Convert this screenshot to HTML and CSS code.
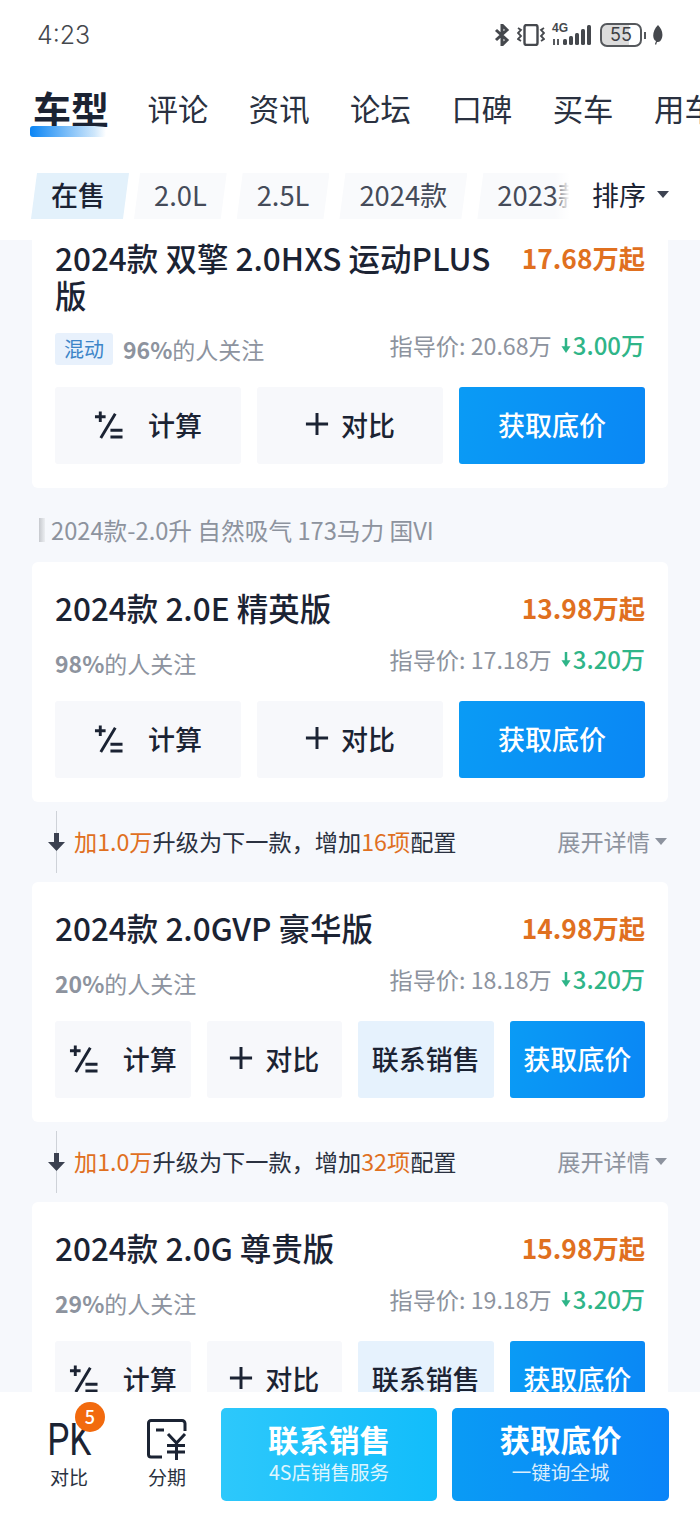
FILE: index.html
```html
<!DOCTYPE html>
<html lang="zh-CN">

<head>
    <meta charset="UTF-8">
    <meta name="viewport" content="width=device-width, initial-scale=1.0">
    <title>车型</title>
    <link rel="stylesheet" href="styles.css">
</head>

<body>
    <svg class="defs" width="0" height="0">
        <symbol id="calc" viewBox="0 0 30 30">
            <path d="M1 7h11M6.500 1.500v11M22 4L7 29M17 21h12.500M17 28h12.500" fill="none" stroke="#1b2333" stroke-width="3" />
        </symbol>
        <symbol id="plus" viewBox="0 0 26 26">
            <path d="M1 13h24M13 1v24" fill="none" stroke="#1b2333" stroke-width="3.200" />
        </symbol>
        <symbol id="down" viewBox="0 0 12 20">
            <path d="M6 1v12" stroke="currentColor" stroke-width="3" fill="none" />
            <path d="M0.500 11h11L6 19z" fill="currentColor" />
        </symbol>
        <symbol id="down-wide" viewBox="0 0 17 18">
            <path d="M6 0h5v9h6L8.500 18 0 9h6z" fill="currentColor" />
        </symbol>
    </svg>

    <div class="page">
        <header class="top">
            <div class="status">
                <span class="time">4:23</span>
                <div class="status-icons">
                    <svg width="16" height="22" viewBox="0 0 16 22">
                        <path d="M2 6l11 10-5 5V1l5 5L2 16" fill="none" stroke="#45484d" stroke-width="3" />
                    </svg>
                    <svg class="ic-vib" width="28" height="22" viewBox="0 0 28 22">
                        <rect x="7.500" y="1" width="13" height="20" rx="2" fill="none" stroke="#45484d" stroke-width="2.400" />
                        <path d="M1 4l3 2-3 3 3 3-3 3 3 2M27 4l-3 2 3 3-3 3 3 3-3 2" fill="none" stroke="#45484d" stroke-width="1.800" />
                    </svg>
                    <div class="net">
                        <span class="net-label">4G</span>
                        <svg width="40" height="22" viewBox="0 0 40 22">
                            <path d="M2 15v6M6 15v6" stroke="#45484d" stroke-width="1.800" />
                            <rect x="11" y="15" width="4" height="6" rx="1.500" fill="#45484d" />
                            <rect x="17" y="12" width="4" height="9" rx="1.500" fill="#45484d" />
                            <rect x="23" y="9" width="4" height="12" rx="1.500" fill="#45484d" />
                            <rect x="29" y="5" width="4" height="16" rx="1.500" fill="#45484d" />
                            <rect x="35" y="1" width="4" height="20" rx="1.500" fill="#45484d" />
                        </svg>
                    </div>
                    <div class="battery"><span class="battery-num">55</span></div>
                    <span class="battery-nub"></span>
                    <svg class="ic-leaf" width="11" height="20" viewBox="0 0 11 20">
                        <path d="M6 0C10 4 12 10 9 15c-1 2-3 2-4 2l-1 3-1-1 1-3C0 14 0 6 6 0z" fill="#45484d" />
                    </svg>
                </div>
            </div>

            <nav class="tabs">
                <a class="tab tab-active">车型</a>
                <a class="tab">评论</a>
                <a class="tab">资讯</a>
                <a class="tab">论坛</a>
                <a class="tab">口碑</a>
                <a class="tab">买车</a>
                <a class="tab">用车</a>
            </nav>

            <div class="filters">
                <div class="chips">
                    <span class="chip chip-active">在售</span>
                    <span class="chip">2.0L</span>
                    <span class="chip">2.5L</span>
                    <span class="chip">2024款</span>
                    <span class="chip">2023款</span>
                </div>
                <div class="sort">排序<i class="caret"></i></div>
            </div>
        </header>

        <main class="list">
            <section class="card card-scrolled">
                <div class="card-head">
                    <h2 class="name">2024款 双擎 2.0HXS 运动PLUS版</h2>
                    <span class="price">17.68万起</span>
                </div>
                <div class="card-sub">
                    <div class="attention"><span class="tag">混动</span><b>96%</b>的人关注</div>
                    <div class="guide">指导价: 20.68万<span class="drop"><svg class="drop-ic" width="10" height="17"><use href="#down" /></svg>3.00万</span></div>
                </div>
                <div class="actions">
                    <a class="btn"><svg class="ic-calc" width="29" height="29"><use href="#calc" /></svg>计算</a>
                    <a class="btn"><svg class="ic-plus" width="24" height="24"><use href="#plus" /></svg>对比</a>
                    <a class="btn btn-primary">获取底价</a>
                </div>
            </section>

            <div class="group-title">2024款-2.0升 自然吸气 173马力 国VI</div>

            <section class="card">
                <div class="card-head">
                    <h2 class="name">2024款 2.0E 精英版</h2>
                    <span class="price">13.98万起</span>
                </div>
                <div class="card-sub">
                    <div class="attention"><b>98%</b>的人关注</div>
                    <div class="guide">指导价: 17.18万<span class="drop"><svg class="drop-ic" width="10" height="17"><use href="#down" /></svg>3.20万</span></div>
                </div>
                <div class="actions">
                    <a class="btn"><svg class="ic-calc" width="29" height="29"><use href="#calc" /></svg>计算</a>
                    <a class="btn"><svg class="ic-plus" width="24" height="24"><use href="#plus" /></svg>对比</a>
                    <a class="btn btn-primary">获取底价</a>
                </div>
            </section>

            <div class="upgrade">
                <svg class="upgrade-ic" width="17" height="18"><use href="#down-wide" /></svg>
                <div class="upgrade-text"><em>加1.0万</em>升级为下一款，增加<em>16项</em>配置</div>
                <div class="expand">展开详情<i class="caret caret-grey"></i></div>
            </div>

            <section class="card">
                <div class="card-head">
                    <h2 class="name">2024款 2.0GVP 豪华版</h2>
                    <span class="price">14.98万起</span>
                </div>
                <div class="card-sub">
                    <div class="attention"><b>20%</b>的人关注</div>
                    <div class="guide">指导价: 18.18万<span class="drop"><svg class="drop-ic" width="10" height="17"><use href="#down" /></svg>3.20万</span></div>
                </div>
                <div class="actions">
                    <a class="btn"><svg class="ic-calc" width="29" height="29"><use href="#calc" /></svg>计算</a>
                    <a class="btn"><svg class="ic-plus" width="24" height="24"><use href="#plus" /></svg>对比</a>
                    <a class="btn btn-light">联系销售</a>
                    <a class="btn btn-primary">获取底价</a>
                </div>
            </section>

            <div class="upgrade">
                <svg class="upgrade-ic" width="17" height="18"><use href="#down-wide" /></svg>
                <div class="upgrade-text"><em>加1.0万</em>升级为下一款，增加<em>32项</em>配置</div>
                <div class="expand">展开详情<i class="caret caret-grey"></i></div>
            </div>

            <section class="card">
                <div class="card-head">
                    <h2 class="name">2024款 2.0G 尊贵版</h2>
                    <span class="price">15.98万起</span>
                </div>
                <div class="card-sub">
                    <div class="attention"><b>29%</b>的人关注</div>
                    <div class="guide">指导价: 19.18万<span class="drop"><svg class="drop-ic" width="10" height="17"><use href="#down" /></svg>3.20万</span></div>
                </div>
                <div class="actions">
                    <a class="btn"><svg class="ic-calc" width="29" height="29"><use href="#calc" /></svg>计算</a>
                    <a class="btn"><svg class="ic-plus" width="24" height="24"><use href="#plus" /></svg>对比</a>
                    <a class="btn btn-light">联系销售</a>
                    <a class="btn btn-primary">获取底价</a>
                </div>
            </section>
        </main>

        <footer class="bottom">
            <a class="tool tool-pk">
                <span class="pk">PK</span>
                <span class="badge">5</span>
                <span class="tool-label">对比</span>
            </a>
            <a class="tool tool-loan">
                <svg width="40" height="41" viewBox="0 0 40 41">
                    <path d="M15 38H4a2.500 2.500 0 0 1-2.500-2.500V4A2.500 2.500 0 0 1 4 1.500h31a3 3 0 0 1 3 3V12" fill="none" stroke="#1b2333" stroke-width="3" />
                    <path d="M9 11h8M21 15l8.500 9 8.500-9M20 26.500h18M20 33h18M29.500 24v17" fill="none" stroke="#1b2333" stroke-width="3" />
                </svg>
                <span class="tool-label">分期</span>
            </a>
            <a class="cta cta-sales">
                <strong>联系销售</strong>
                <small>4S店销售服务</small>
            </a>
            <a class="cta cta-price">
                <strong>获取底价</strong>
                <small>一键询全城</small>
            </a>
        </footer>
    </div>
</body>

</html>
```

FILE: styles.css
```css
* {
    box-sizing: border-box;
}

body {
    margin: 0;
    font-family: "Noto Sans CJK SC", "Noto Sans", sans-serif;
    color: #1b2333;
    background-color: #f6f8fc;
}

a {
    color: inherit;
    text-decoration: none;
}

.defs {
    position: absolute;
}

.page {
    display: flex;
    flex-direction: column;
    width: 700px;
    height: 1516px;
    overflow: hidden;
}

/* top area */
.top {
    flex: none;
    height: 240px;
    background-color: #fff;
}

.status {
    display: flex;
    align-items: center;
    justify-content: space-between;
    height: 70px;
    padding: 0 37px 0 37px;
}

.time {
    font-family: "Inter", sans-serif;
    font-size: 25px;
    font-weight: 300;
    color: #45484d;
}

.status-icons {
    display: flex;
    align-items: center;
}

.ic-vib {
    margin-left: 7px;
}

.net {
    position: relative;
    margin-left: 7px;
    width: 40px;
    height: 22px;
}

.net-label {
    position: absolute;
    left: 0;
    top: -3px;
    font-family: "Liberation Sans", sans-serif;
    font-size: 12px;
    font-weight: 700;
    color: #45484d;
}

.battery {
    display: flex;
    align-items: center;
    justify-content: center;
    margin-left: 8px;
    width: 42px;
    height: 24px;
    border: 2px solid #55585c;
    border-radius: 7px;
    background: linear-gradient(90deg, #dcdcdc 72%, #fff 72%);
}

.battery-num {
    font-family: "Inter", sans-serif;
    font-size: 18px;
    line-height: 20px;
    color: #3c3f44;
}

.battery-nub {
    margin-left: 2px;
    width: 2px;
    height: 7px;
    background-color: #55585c;
}

.ic-leaf {
    margin-left: 6px;
}

.tabs {
    display: flex;
    align-items: center;
    gap: 40.500px;
    height: 80px;
    padding-left: 33px;
    padding-bottom: 4px;
    white-space: nowrap;
    overflow: hidden;
    font-size: 30.400px;
    color: #2a3140;
}

.tab {
    flex: none;
    line-height: 40px;
}

.tab-active {
    position: relative;
    margin-right: -2px;
    font-size: 38px;
    font-weight: 700;
    color: #1b2333;
}

.tab-active::after {
    content: "";
    position: absolute;
    left: -3px;
    bottom: -9px;
    width: 76px;
    height: 11px;
    border-radius: 3px;
    background: linear-gradient(90deg, #0a85f5, #cfe7fb 85%, #ffffff00);
}

.filters {
    display: flex;
    align-items: center;
    height: 46px;
    margin-top: 23px;
    padding-left: 31px;
}

.chips {
    position: relative;
    flex: 1;
    display: flex;
    gap: 10px;
    min-width: 0;
    height: 46px;
    margin-right: 20px;
    overflow: hidden;
}

.chips::after {
    content: "";
    position: absolute;
    top: 0;
    right: 0;
    width: 18px;
    height: 100%;
    background: linear-gradient(90deg, #ffffff00, #fff 85%);
}

.chip {
    flex: none;
    display: flex;
    align-items: center;
    height: 46px;
    padding: 0 20px 4px;
    font-size: 27.300px;
    color: #454b59;
    background-color: #f9fafc;
    clip-path: polygon(6px 0, 100% 0, calc(100% - 6px) 100%, 0 100%);
}

.chip-active {
    margin-right: -5px;
    padding: 0 24px 4px 20px;
    font-size: 27px;
    font-weight: 500;
    color: #1b2333;
    background-color: #e3f1fb;
}

.sort {
    flex: none;
    display: flex;
    align-items: center;
    width: 108px;
    padding-bottom: 4px;
    font-size: 27px;
    color: #1b2333;
}

.caret {
    margin-left: 11px;
    border-top: 7px solid #3d4352;
    border-left: 6px solid transparent;
    border-right: 6px solid transparent;
}

.caret-grey {
    margin-left: 5px;
    border-top-color: #8d939e;
}

/* list */
.list {
    flex: 1;
    min-height: 0;
    overflow: hidden;
}

.card {
    margin: 0 32px;
    padding: 27px 23px 24px;
    border-radius: 6px;
    background-color: #fff;
}

.card-scrolled {
    padding-top: 0;
    border-radius: 0 0 6px 6px;
}

.card-head {
    display: flex;
    justify-content: space-between;
    gap: 28px;
}

.card-scrolled .card-head {
    margin-top: -1px;
}

.name {
    margin: 0;
    font-size: 31.500px;
    line-height: 37px;
    font-weight: 500;
}

.price {
    flex: none;
    font-size: 26.300px;
    line-height: 37px;
    font-weight: 700;
    color: #e0701f;
}

.card-sub {
    display: flex;
    justify-content: space-between;
    height: 36px;
    margin-top: 19px;
    margin-bottom: 20px;
}

.card-scrolled .card-sub {
    margin-top: 18px;
}

.attention {
    display: flex;
    align-items: center;
    font-size: 23px;
    line-height: 36px;
    color: #8d939e;
}

.attention b {
    font-weight: 700;
}

.tag {
    margin-right: 10px;
    padding: 0 9px;
    font-size: 20px;
    line-height: 32px;
    border-radius: 3px;
    color: #3d85c8;
    background-color: #e8f1fc;
}

.guide {
    display: flex;
    align-items: center;
    height: 30px;
    margin-top: -1px;
    font-size: 23.200px;
    line-height: 30px;
    color: #8d939e;
}

.drop {
    display: flex;
    align-items: center;
    margin-left: 9px;
    font-size: 24px;
    font-weight: 500;
    color: #2fb588;
}

.drop-ic {
    margin-right: 2px;
}

.actions {
    display: flex;
    gap: 16px;
}

.btn {
    flex: 1;
    display: flex;
    align-items: center;
    justify-content: center;
    height: 77px;
    padding-bottom: 3px;
    font-size: 27px;
    font-weight: 500;
    border-radius: 3px;
    background-color: #f7f8fb;
}

.ic-calc {
    margin-right: 25px;
}

.ic-plus {
    margin-right: 12px;
}

.btn-primary {
    color: #fff;
    background: linear-gradient(100deg, #0a9bf5, #0a87f5);
}

.btn-light {
    background-color: #e6f2fd;
}

.group-title {
    display: flex;
    align-items: center;
    height: 74px;
    padding-top: 10px;
    padding-left: 39px;
    font-size: 23.700px;
    color: #8d939e;
}

.group-title::before {
    content: "";
    width: 6px;
    height: 24px;
    margin-right: 6px;
    background: linear-gradient(90deg, #c6c9ce, #eceef1);
}

.upgrade {
    position: relative;
    display: flex;
    align-items: center;
    justify-content: space-between;
    height: 80px;
    padding: 0 33px 0 48px;
    font-size: 23.200px;
}

.upgrade::before {
    content: "";
    position: absolute;
    left: 56px;
    top: 9px;
    bottom: 9px;
    width: 1px;
    background-color: #ced2d8;
}

.upgrade-ic {
    position: relative;
    flex: none;
    color: #3b4150;
    background-color: #f6f8fc;
}

.upgrade-text {
    flex: 1;
    margin-left: 9px;
    margin-bottom: 2px;
    color: #2a3140;
}

.upgrade-text em {
    font-style: normal;
    color: #e0701f;
}

.expand {
    display: flex;
    align-items: center;
    margin-bottom: 2px;
    color: #8d939e;
}

/* bottom bar */
.bottom {
    flex: none;
    display: flex;
    align-items: center;
    height: 124px;
    padding-right: 31px;
    background-color: #fff;
}

.tool {
    position: relative;
    flex: none;
    display: flex;
    flex-direction: column;
    align-items: center;
    justify-content: flex-end;
    height: 93px;
    padding-bottom: 12px;
}

.tool-pk {
    width: 70px;
    margin-left: 34px;
}

.tool-loan {
    width: 50px;
    margin-left: 38px;
    margin-right: 29px;
}

.pk {
    margin-bottom: -3px;
    font-family: "Roboto", sans-serif;
    font-size: 45px;
    line-height: 46px;
    font-weight: 400;
    color: #1b2333;
    transform: scaleX(0.78);
}

.badge {
    position: absolute;
    left: 41px;
    top: -6px;
    width: 30px;
    height: 30px;
    font-size: 18px;
    font-weight: 500;
    line-height: 29px;
    text-align: center;
    border-radius: 50%;
    color: #fff;
    background-color: #f26a0e;
}

.tool-label {
    margin-top: 5px;
    font-size: 19px;
    line-height: 24px;
    color: #2a3140;
}

.cta {
    flex: none;
    display: flex;
    flex-direction: column;
    align-items: center;
    justify-content: center;
    width: 216px;
    height: 93px;
    margin-right: 15px;
    padding-bottom: 4px;
    border-radius: 5px;
    color: #fff;
}

.cta:last-child {
    width: 217px;
    margin-right: 0;
}

.cta strong {
    font-size: 30.500px;
    line-height: 36px;
    font-weight: 700;
}

.cta small {
    margin-top: 3px;
    font-size: 19.500px;
    line-height: 24px;
    opacity: 0.85;
}

.cta-sales {
    background: linear-gradient(90deg, #2dc8fb, #12bdfb);
}

.cta-price {
    background: linear-gradient(90deg, #0a9bf5, #0a84f8);
}
```
